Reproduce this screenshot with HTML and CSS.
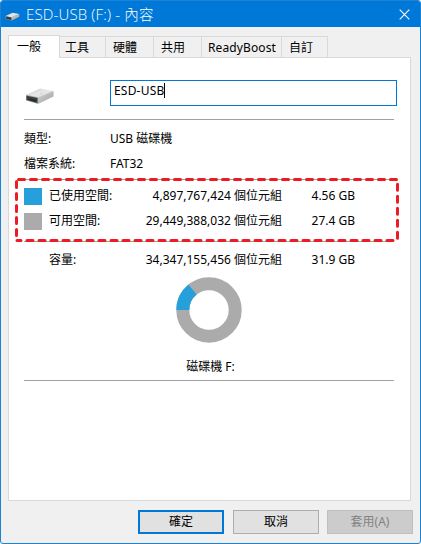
FILE: index.html
```html
<!DOCTYPE html>
<html lang="zh-Hant">
<head>
<meta charset="utf-8">
<title>ESD-USB (F:) - 內容</title>
<link rel="stylesheet" href="styles.css">
</head>
<body>
<svg width="0" height="0" class="defs">
  <defs>
    <linearGradient id="top" x1="0" y1="0" x2="1" y2="1"><stop offset="0" stop-color="#c9c9c9"/><stop offset=".5" stop-color="#e8e8e8"/><stop offset="1" stop-color="#d2d2d2"/></linearGradient>
    <linearGradient id="side" x1="0" y1="0" x2="1" y2="1"><stop offset="0" stop-color="#cfcfcf"/><stop offset="1" stop-color="#a4a4a4"/></linearGradient>
    <symbol id="drive" viewBox="0 0 30 18">
      <path d="M1 8 15 1.500 28.500 4 13 11z" fill="url(#top)"/>
      <path d="M13 10.500 28.500 4 28.500 9.500 13 17z" fill="url(#side)"/>
      <path d="M1 7.800 13 10.300V17L1 13.500z" fill="#a8aaa9"/>
      <path d="M1.500 8.800 12.500 11V16L1.500 13z" fill="#38413f"/>
      <path d="M4 11.500 11 13V15L4 13z" fill="#252d2b"/>
      <path d="M15 6.500 17.500 6.900" stroke="#b9dcf3" stroke-width="1.200"/>
    </symbol>
  </defs>
</svg>
<div class="window">
  <header class="titlebar">
    <svg class="title-icon"><use href="#drive"/></svg>
    <h1>ESD-USB (F:) - <span class="cjk">內容</span></h1>
    <svg class="close" viewBox="0 0 11 11"><path d="M.7.7 10.300 10.300M10.300.7.7 10.300"/></svg>
  </header>
  <main class="body">
    <nav class="tabs">
      <span class="tab active">一般</span><span class="tab tools">工具</span><span class="tab">硬體</span><span class="tab">共用</span><span class="tab boost">ReadyBoost</span><span class="tab custom">自訂</span>
    </nav>
    <section class="panel">
      <div class="identity">
        <svg class="drive-icon"><use href="#drive"/></svg>
        <div class="name"><span>ESD-USB</span><i class="caret"></i></div>
      </div>
      <div class="rule"></div>
      <dl class="facts">
        <dt>類型:</dt><dd>USB 磁碟機</dd>
        <dt>檔案系統:</dt><dd>FAT32</dd>
      </dl>
      <div class="space">
        <svg class="highlight" width="390" height="70" viewBox="12 175 390 70">
          <path class="hairline" d="M24 179.500H394M24 241.500H394"/>
          <path class="dash" d="M18.500 179.500H396.500"/>
          <path class="dash" d="M397.500 184.200V240"/>
          <path class="dash" d="M393 240.500H17"/>
          <path class="dash" d="M16.500 181.500V238"/>
        </svg>
        <div class="row"><i class="swatch used"></i><span class="label">已使用空間:</span><span class="bytes">4,897,767,424 個位元組</span><span class="size">4.56 GB</span></div>
        <div class="row"><i class="swatch free"></i><span class="label">可用空間:</span><span class="bytes">29,449,388,032 個位元組</span><span class="size">27.4 GB</span></div>
      </div>
      <div class="row capacity"><i class="swatch"></i><span class="label">容量:</span><span class="bytes">34,347,155,456 個位元組</span><span class="size">31.9 GB</span></div>
      <svg class="donut" viewBox="-33 -33 66 66">
        <circle r="26.200" fill="none" stroke="#ababab" stroke-width="13"/>
        <path d="M-32.700 0A32.700 32.700 0 0 1-20.500-25.500L-12.400-15.400A19.700 19.700 0 0 0-19.700 0z" fill="#26a0da"/>
      </svg>
      <div class="caption">磁碟機 F:</div>
      <div class="rule"></div>
    </section>
    <footer class="actions">
      <button class="btn ok">確定</button>
      <button class="btn">取消</button>
      <button class="btn" disabled>套用(A)</button>
    </footer>
  </main>
</div>
</body>
</html>
```
FILE: styles.css
```css
* { box-sizing: border-box; }
body { margin: 0; background: #fff; overflow: hidden; color: #000; font: 12px/16px "Noto Sans", "Noto Sans CJK TC", sans-serif; }
.defs { position: absolute; }
.window { width: 421px; height: 544px; border: 1px solid #1883d7; border-radius: 3px; background: #f0f0f0; overflow: hidden; }
.titlebar { display: flex; align-items: center; height: 26px; padding: 0 10px 0 4px; background: #0078d7; color: #fff; }
.title-icon { width: 15px; height: 9px; margin-top: 4px; }
h1 { flex: 1; margin: 0 0 0 6px; font: 300 15px/24px "Open Sans", "Noto Sans", "Noto Sans CJK TC", sans-serif; letter-spacing: .15px; }
h1 .cjk { font-size: 14.500px; }
.close { width: 11px; height: 11px; fill: none; stroke: #fff; stroke-width: 1.1; }
.body { padding: 8px 8px 0 7px; }
.tabs { display: flex; align-items: flex-end; height: 23px; margin-bottom: -1px; position: relative; z-index: 1; }
.tab { width: 48px; height: 21px; margin-bottom: 1px; padding: 2px 0 0 7px; border: 1px solid #d9d9d9; border-width: 1px 1px 0 0; white-space: nowrap; line-height: 18px; }
.tab.active { width: 52px; height: 23px; margin-bottom: 0; padding: 2px 0 0 8px; background: #fff; border-left-width: 1px; }
.tab.tools { width: 46px; padding-left: 5px; }
.tab.boost { width: 80px; padding-left: 6px; letter-spacing: .12px; }
.tab.custom { width: 46px; }
.panel { width: 403px; height: 444px; border: 1px solid #d9d9d9; background: #fff; padding: 22px 16px 0 15px; }
.identity { display: flex; justify-content: space-between; height: 39px; margin-right: -3px; }
.drive-icon { width: 30px; height: 18px; margin: 7px 0 0 1px; }
.name { display: flex; align-items: flex-start; width: 287px; height: 26px; padding: 2px 0 0 3px; border: 1px solid #0078d7; line-height: 15px; letter-spacing: .2px; }
.caret { width: 1px; height: 15px; background: #000; }
.rule { height: 1px; background: #a0a0a0; }
.facts { display: grid; grid-template-columns: 86px 1fr; grid-auto-rows: 25px; margin: 11px 0 0; }
dd { margin: 0; }
.space { position: relative; padding-top: 7px; }
.highlight { position: absolute; left: -12px; top: -6px; }
.hairline { stroke: #a0a0a0; }
.dash { fill: none; stroke: #ed1c24; stroke-width: 3; stroke-linecap: round; stroke-dasharray: 6 6; }
.row { display: grid; grid-template-columns: 25px 80px 153px 73px; height: 25px; line-height: 16px; white-space: nowrap; position: relative; }
.swatch { width: 18px; height: 17px; }
.used { background: #26a0da; }
.free { background: #ababab; }
.bytes, .size { text-align: right; }
.capacity { margin-top: 14px; }
.donut { display: block; width: 66px; height: 66px; margin: 0 auto 0 152px; }
.caption { height: 37px; padding: 16px 0 0 3px; text-align: center; }
.actions { display: flex; gap: 9px; padding: 9px 0 0 130px; margin-right: -8px; }
.btn { flex: none; width: 86px; height: 24px; padding: 0; border: 1px solid #adadad; background: #e1e1e1; color: #000; font: inherit; }
.ok { border: 2px solid #0078d7; }
.btn:disabled { border-color: #bfbfbf; background: #ccc; color: #838383; }
.btn + .btn + .btn { margin-left: -1px; }
```
